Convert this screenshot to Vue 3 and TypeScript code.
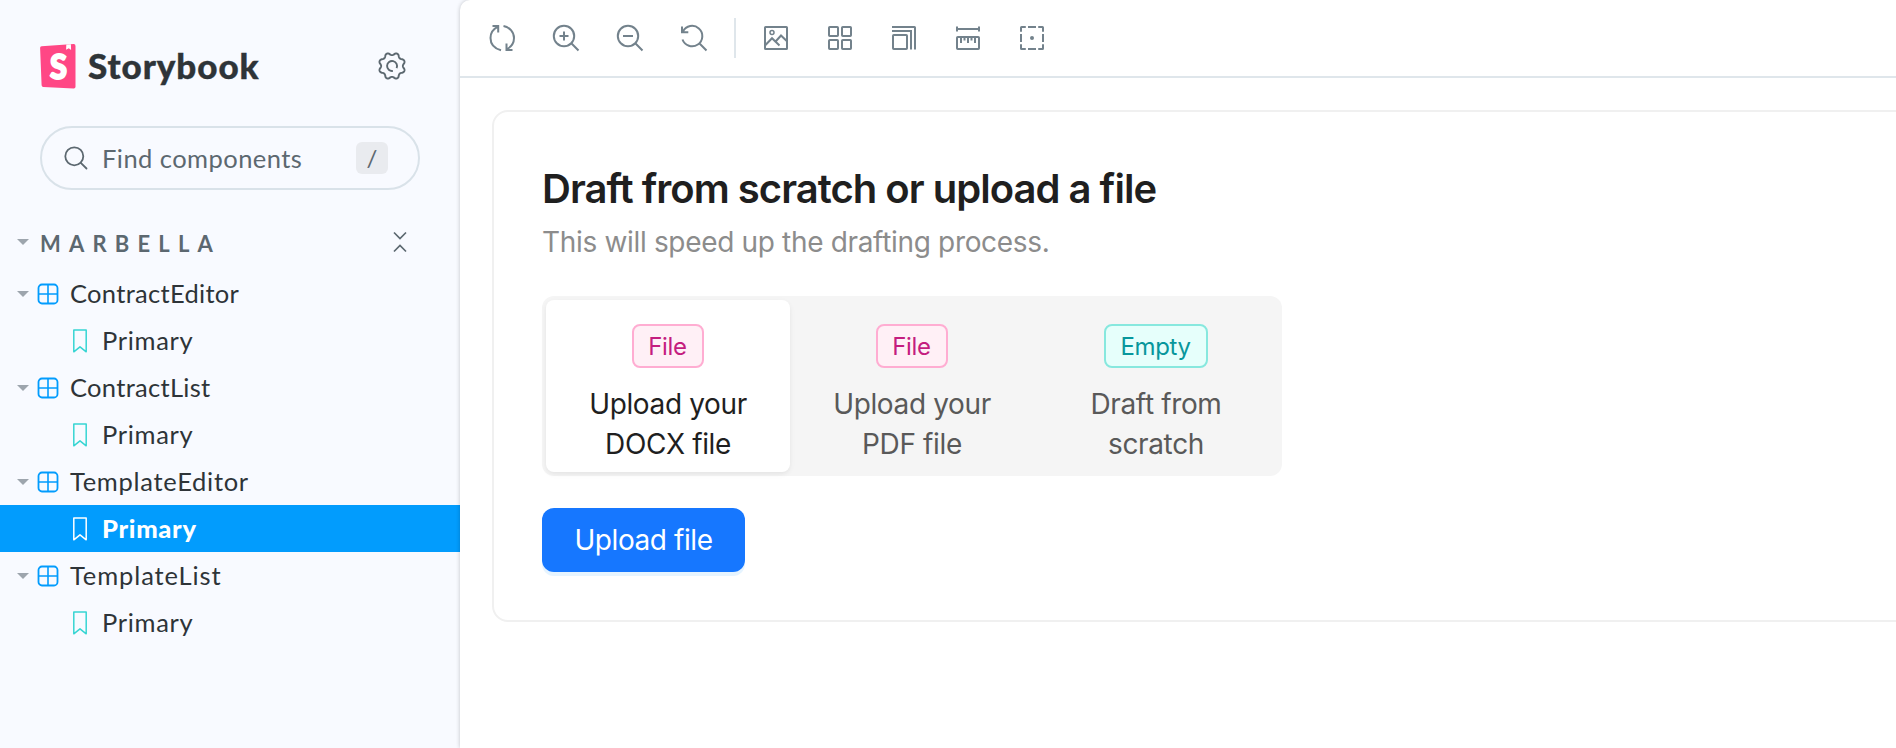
<script setup lang="ts">
interface Group {
  name: string
  fit: string
  selected?: boolean
}

interface Option {
  tag: string
  tone: string
  lines: string[]
  active?: boolean
}

const groups: Group[] = [
  { name: 'ContractEditor', fit: 'fit-contract' },
  { name: 'ContractList', fit: 'fit-contract' },
  { name: 'TemplateEditor', fit: 'fit-template', selected: true },
  { name: 'TemplateList', fit: 'fit-template-list' },
]

const options: Option[] = [
  { tag: 'File', tone: 'magenta', lines: ['Upload your', 'DOCX file'], active: true },
  { tag: 'File', tone: 'magenta', lines: ['Upload your', 'PDF file'] },
  { tag: 'Empty', tone: 'cyan', lines: ['Draft from', 'scratch'] },
]

// Outline of the settings cog: a circle whose radius waves through eight lobes.
function cogPath(cx: number, cy: number, lobes: number): string {
  const steps = 128
  const points: string[] = []
  for (let i = 0; i < steps; i++) {
    const angle = (i / steps) * Math.PI * 2
    const wave = -Math.cos(lobes * angle)
    const radius = 12.1 + 1.25 * Math.sign(wave) * Math.pow(Math.abs(wave), 0.75)
    points.push(`${(cx + radius * Math.cos(angle)).toFixed(2)} ${(cy + radius * Math.sin(angle)).toFixed(2)}`)
  }
  return `M${points.join('L')}Z`
}

const cog = cogPath(15, 15, 8)
</script>

<template>
  <div class="shell">
    <aside class="sidebar">
      <header class="brand">
        <svg class="logo" width="36" height="45" viewBox="0 0 36 45">
          <path d="M1.600 2.200 33.600.1Q35.500 0 35.500 1.900V42.700Q35.500 44.600 33.600 44.500L3.400 43.100Q1.700 43 1.600 41.300L.1 4Q0 2.300 1.600 2.200Z" fill="#ff4785" />
          <path d="M26.300.6 30.900.3 31.100 6 28.800 4.200 26.100 5.800Z" fill="#fff" />
          <text class="logo-s" transform="translate(18.600 34.600) scale(.88 1)" text-anchor="middle">S</text>
        </svg>
        <span class="wordmark">Storybook</span>
        <svg class="gear" width="30" height="30" viewBox="0 0 30 30" fill="none" stroke="#5c6870" stroke-width="1.900">
          <path :d="cog" stroke-linejoin="round" />
          <path d="M15.900 19.900A5 5 0 1 1 19.600 17.100" />
        </svg>
      </header>

      <div class="search">
        <svg class="lens" width="24" height="24" viewBox="0 0 24 24" fill="none" stroke="#5c6870" stroke-width="1.800">
          <circle cx="10.300" cy="10.300" r="9" />
          <path d="M16.800 16.800 22.500 22.500" stroke-linecap="round" />
        </svg>
        <span class="placeholder">Find components</span>
        <kbd class="key">/</kbd>
      </div>

      <div class="section">
        <svg class="caret" width="12" height="6" viewBox="0 0 12 6"><path d="M0 0H12L6 6Z" fill="#9da5ad" /></svg>
        <span class="section-name">MARBELLA</span>
        <svg class="collapse" width="14" height="22" viewBox="0 0 14 22" fill="none" stroke="#5c6870" stroke-width="1.700">
          <path d="M1 1.500 7 7.500 13 1.500M1 20.500 7 14.500 13 20.500" />
        </svg>
      </div>

      <nav class="tree">
        <template v-for="g in groups" :key="g.name">
          <div class="row">
            <svg class="caret" width="12" height="6" viewBox="0 0 12 6"><path d="M0 0H12L6 6Z" fill="#9da5ad" /></svg>
            <svg class="grid-icon" width="22" height="22" viewBox="0 0 22 22" fill="none" stroke="#029cfd">
              <rect x="1.500" y="1.500" width="19" height="19" rx="3.500" stroke-width="1.800" />
              <path d="M11 1.500V20.500M1.500 11H20.500" stroke-width="1.600" />
            </svg>
            <span class="name" :class="g.fit">{{ g.name }}</span>
          </div>
          <div class="row story" :class="{ selected: g.selected }">
            <svg class="bookmark" width="14" height="24" viewBox="0 0 14 24" fill="none" stroke="currentColor" stroke-width="1.500">
              <path d="M.8 1H13.200V22.800L7 17.800.8 22.800Z" stroke-linejoin="round" />
            </svg>
            <span class="name">Primary</span>
          </div>
        </template>
      </nav>
    </aside>

    <main class="stage">
      <div class="toolbar">
        <svg class="tool" viewBox="0 0 28 28">
          <path d="M13 26.300C6.500 24.500 2.500 20 2.500 14 2.500 9 5.500 4.800 10 2.600M4.500 2H10.200V8.500M15.500 2C21.500 3.200 26 8 26 14 26 18.500 23.500 22.500 19.500 25M24.500 26H18.500V19.500" />
        </svg>
        <svg class="tool" viewBox="0 0 28 28">
          <circle cx="12" cy="12" r="10.200" /><path d="M19.300 19.300 26.500 26.500M12 7.500V16.500M7.500 12H16.500" />
        </svg>
        <svg class="tool" viewBox="0 0 28 28">
          <circle cx="12" cy="12" r="10.200" /><path d="M19.300 19.300 26.500 26.500M7 12H17" />
        </svg>
        <svg class="tool" viewBox="0 0 28 28">
          <path d="M2.500 15.500A10.200 10.200 0 1 0 3 7.500M2 2.500V8.200H8.300M19.300 19.300 26.500 26.500" />
        </svg>
        <i class="divider"></i>
        <svg class="tool" viewBox="0 0 28 28">
          <rect x="3" y="3" width="22" height="22" rx=".6" /><circle cx="10" cy="8.500" r="2" stroke-width="1.500" />
          <path d="M3 21.500 10 14.200 17.500 21.500M13.600 17.500 19 11.500 25 17.300" />
        </svg>
        <svg class="tool" viewBox="0 0 28 28">
          <rect x="3" y="3" width="9" height="9" rx=".8" /><rect x="16" y="3" width="9" height="9" rx=".8" />
          <rect x="3" y="16" width="9" height="9" rx=".8" /><rect x="16" y="16" width="9" height="9" rx=".8" />
        </svg>
        <svg class="tool" viewBox="0 0 28 28">
          <rect x="3" y="11" width="14" height="14" rx=".8" /><path d="M2 7H21V25.500M2 3H24.500Q25 3 25 3.500V25.500" />
        </svg>
        <svg class="tool" viewBox="0 0 28 28">
          <rect x="3" y="13" width="22" height="12" rx=".8" /><path d="M3 2.500V7.500M25 2.500V7.500M3 5H25M7 13V19M14 13V19M21 13V19M10.500 13V16.500M17.500 13V16.500" />
        </svg>
        <svg class="tool" viewBox="0 0 28 28">
          <path d="M7.800 3H3.500Q3 3 3 3.500V7.800M20.200 3H24.500Q25 3 25 3.500V7.800M7.800 25H3.500Q3 25 3 24.500V20.200M20.200 25H24.500Q25 25 25 24.500V20.200M10 3H18M10 25H18M3 10V18M25 10V18" />
          <circle cx="14" cy="14" r="2" class="dot" />
        </svg>
      </div>

      <section class="card">
        <h1 class="title">Draft from scratch or upload a file</h1>
        <p class="subtitle">This will speed up the drafting process.</p>
        <div class="segmented">
          <div v-for="(o, i) in options" :key="i" class="segment" :class="{ active: o.active }">
            <span class="tag" :class="o.tone">{{ o.tag }}</span>
            <div class="label">
              <div v-for="line in o.lines" :key="line">{{ line }}</div>
            </div>
          </div>
        </div>
        <button class="upload" type="button">Upload file</button>
      </section>
    </main>
  </div>
</template>

<style>
html,
body {
  margin: 0;
  overflow: hidden;
}
</style>

<style scoped>
* {
  box-sizing: border-box;
}
.shell {
  display: flex;
  width: 1896px;
  height: 748px;
  overflow: hidden;
  background: #f8faff;
  font-family: Inter, 'Liberation Sans', sans-serif;
}
.sidebar {
  width: 460px;
  flex: none;
  color: #2e3438;
  font-family: Lato, 'Open Sans', sans-serif;
}
.brand {
  display: flex;
  align-items: center;
  height: 126px;
  padding: 6px 53px 0 40px;
}
.logo {
  overflow: visible;
}
.logo-s {
  font: 900 35px Lato, sans-serif;
  fill: #fff;
  stroke: #fff;
  stroke-width: 2px;
}
.wordmark {
  flex: 1;
  margin-left: 12px;
  padding-bottom: 2px;
  font: 900 35px/44px Lato, sans-serif;
  letter-spacing: 0.950px;
  -webkit-text-stroke: 0.400px currentColor;
}
.search {
  display: flex;
  align-items: center;
  width: 380px;
  height: 64px;
  margin-left: 40px;
  padding: 0 30px 0 22px;
  border: 2px solid #d9e2e9;
  border-radius: 32px;
  color: #5c6870;
}
.placeholder {
  flex: 1;
  margin-left: 14px;
  padding-bottom: 1px;
  font-size: 25.500px;
  letter-spacing: 0.450px;
  white-space: nowrap;
}
.key {
  width: 32px;
  height: 32px;
  border-radius: 6px;
  background: #e9ebef;
  font: 24px/31px Lato, sans-serif;
  text-align: center;
}
.section {
  display: flex;
  align-items: center;
  height: 44px;
  margin-top: 30px;
  padding: 0 53px 0 17px;
}
.section-name {
  flex: 1;
  margin-left: 11px;
  padding-top: 2px;
  color: #5c6870;
  font-size: 22px;
  font-weight: 700;
  letter-spacing: 8.200px;
}
.tree {
  margin-top: 6px;
}
.row {
  display: flex;
  align-items: center;
  height: 47px;
  padding-left: 17px;
  font-size: 25.500px;
  white-space: nowrap;
}
.name {
  padding-bottom: 2px;
}
.grid-icon {
  margin-left: 8px;
}
.grid-icon + .name {
  margin-left: 11px;
}
.fit-contract {
  letter-spacing: 0.300px;
}
.fit-template {
  letter-spacing: 0.720px;
}
.fit-template-list {
  letter-spacing: 0.900px;
}
.story {
  padding-left: 73px;
}
.story .name {
  margin-left: 15px;
  letter-spacing: 0.700px;
}
.bookmark {
  color: #37d5d3;
}
.selected {
  background: #029cfd;
  color: #fff;
  font-weight: 900;
}
.selected .bookmark {
  color: #fff;
}
.stage {
  flex: 1;
  min-width: 0;
  height: 748px;
  border-radius: 10px 0 0 0;
  background: #fff;
  box-shadow: 0 0 4px rgba(0, 0, 0, 0.22);
}
.toolbar {
  display: flex;
  align-items: center;
  gap: 36px;
  height: 78px;
  padding-left: 28px;
  border-bottom: 2px solid #dfe6eb;
}
.tool {
  width: 28px;
  height: 28px;
  fill: none;
  stroke: #73828c;
  stroke-width: 2;
}
.dot {
  fill: #73828c;
  stroke: none;
}
.divider {
  width: 2px;
  height: 40px;
  margin: 0 -10px;
  background: #dfe6eb;
}
.card {
  width: 1500px;
  height: 512px;
  margin: 32px 0 0 32px;
  padding: 48px;
  border: 2px solid #f0f0f0;
  border-radius: 16px;
  color: #1f1f1f;
}
.title {
  margin: 4px 0 0;
  font-size: 40px;
  font-weight: 600;
  line-height: 50px;
  letter-spacing: -0.980px;
  white-space: nowrap;
}
.subtitle {
  margin: 6px 0 0;
  color: #8c8c8c;
  font-size: 28px;
  line-height: 44px;
  letter-spacing: -0.330px;
}
.segmented {
  display: flex;
  width: 740px;
  height: 180px;
  margin-top: 32px;
  padding: 4px;
  border-radius: 12px;
  background: #f5f5f5;
}
.segment {
  width: 244px;
  height: 172px;
  padding-top: 24px;
  border-radius: 8px;
  color: #595959;
  text-align: center;
}
.active {
  background: #fff;
  color: #1f1f1f;
  box-shadow: 0 2px 4px rgba(0, 0, 0, 0.05), 0 2px 12px -2px rgba(0, 0, 0, 0.04);
}
.tag {
  display: block;
  width: max-content;
  height: 44px;
  margin: 0 auto;
  padding: 0 15px 0 14px;
  border: 2px solid;
  border-radius: 8px;
  font-size: 24px;
  line-height: 41px;
  letter-spacing: -0.350px;
}
.magenta {
  border-color: #ffadd2;
  background: #fff0f6;
  color: #c41d7f;
}
.cyan {
  border-color: #87e8de;
  background: #e6fffb;
  color: #08979c;
}
.label {
  margin-top: 16px;
  font-size: 28px;
  line-height: 40px;
  letter-spacing: -0.360px;
}
.upload {
  display: block;
  width: 203px;
  height: 64px;
  margin-top: 32px;
  padding: 0;
  border: 0;
  border-radius: 12px;
  background: #1677ff;
  box-shadow: 0 4px 0 rgba(5, 145, 255, 0.1);
  color: #fff;
  font: 28px/64px Inter, sans-serif;
  letter-spacing: -0.420px;
}
</style>
